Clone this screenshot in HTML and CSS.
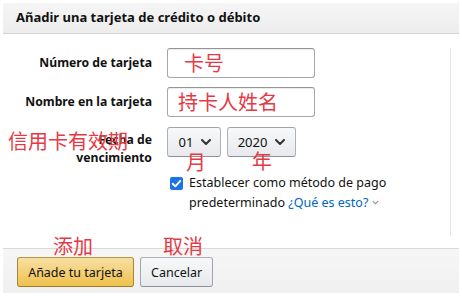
FILE: index.html
```html
<!DOCTYPE html>
<html lang="es">
<head>
<meta charset="utf-8">
<link rel="stylesheet" href="styles.css">
</head>
<body>
<div class="modal">
  <header class="modal-head">Añadir una tarjeta de crédito o débito</header>
  <main class="modal-body">
    <div class="form">
      <div class="row">
        <label class="label">Número de tarjeta</label>
        <div class="field"><div class="input cn-val cn-short">卡号</div></div>
      </div>
      <div class="row">
        <label class="label">Nombre en la tarjeta</label>
        <div class="field"><div class="input cn-val">持卡人姓名</div></div>
      </div>
      <div class="row row-date">
        <label class="label label-2">Fecha de<br>vencimiento</label>
        <div class="field selects">
          <div class="select sel-month">01 <svg class="chev" viewBox="0 0 10 6"><path d="M1 1l4 4 4-4" /></svg></div>
          <div class="select sel-year">2020 <svg class="chev" viewBox="0 0 10 6"><path d="M1 1l4 4 4-4" /></svg></div>
          <span class="note note-month">月</span>
          <span class="note note-year">年</span>
        </div>
        <span class="note note-exp">信用卡有效期</span>
      </div>
      <div class="row row-check">
        <div></div>
        <div class="check">
          <span class="box"><svg viewBox="0 0 12 12"><path d="M2.5 6.2l2.4 2.4 4.6-5" /></svg></span>
          <p class="check-text">Establecer como método de pago<br>predeterminado <a class="link">¿Qué es esto?</a> <svg class="mini-chev" viewBox="0 0 8 5"><path d="M1 1l3 3 3-3" /></svg></p>
        </div>
      </div>
    </div>
  </main>
  <footer class="modal-foot">
    <div class="btn-wrap">
      <span class="note note-add">添加</span>
      <button class="btn btn-primary">Añade tu tarjeta</button>
    </div>
    <div class="btn-wrap">
      <span class="note note-cancel">取消</span>
      <button class="btn btn-secondary">Cancelar</button>
    </div>
  </footer>
</div>
</body>
</html>
```

FILE: styles.css
```css
* { box-sizing: border-box; }
html, body { margin: 0; padding: 0; background: #fff; }
body {
  font-family: "Noto Sans", "Open Sans", Arial, sans-serif;
  color: #111;
  font-size: 13px;
  width: 462px;
  height: 299px;
  overflow: hidden;
}
.modal {
  margin: 3px 3px 0 3px;
}
.modal-head {
  height: 31px;
  background: linear-gradient(#f5f5f5, #ededed);
  border-bottom: 1px solid #d3d3d3;
  padding: 0 13px;
  line-height: 29px;
  font-size: 13px;
  font-weight: 700;
  color: #111;
}
.modal-body {
  height: 214px;
  padding-top: 14px;
}
.form {
  height: 188px;
  margin-right: 8px;
  border-right: 1px solid #e6e6e6;
  display: flex;
  flex-direction: column;
  gap: 9px;
}
.row {
  display: grid;
  grid-template-columns: 149px 148px;
  column-gap: 15px;
  align-items: center;
  position: relative;
}
.label {
  text-align: right;
  font-weight: 700;
  font-size: 12.2px;
  line-height: 18px;
}
.label-2 { align-self: start; padding-top: 5px; }
.input {
  height: 30px;
  border: 1px solid #a6a6a6;
  border-top-color: #949494;
  border-radius: 3px;
  box-shadow: 0 1px 0 rgba(255,255,255,.5), 0 1px 0 rgba(0,0,0,.07) inset;
  background: #fff;
}
.cn-val {
  font-family: "Noto Sans CJK SC", sans-serif;
  color: #e53a45;
  font-size: 20px;
  line-height: 28px;
  padding-left: 10px;
}
.cn-short { padding-left: 16px; }
.selects {
  display: flex;
  gap: 6px;
  position: relative;
  height: 40px;
  align-items: flex-start;
}
.select {
  height: 30px;
  border: 1px solid #adb1b8;
  border-top-color: #a2a6ac;
  border-bottom-color: #8d9096;
  border-radius: 3px;
  background: linear-gradient(#f7f8fa, #e7e9ec);
  display: flex;
  align-items: center;
  justify-content: center;
  gap: 8px;
  font-size: 13px;
  color: #111;
}
.sel-month { width: 54px; padding-left: 2px; }
.sel-year { width: 69px; }
.chev {
  width: 10px; height: 6px;
  fill: none; stroke: #333; stroke-width: 2; stroke-linecap: round; stroke-linejoin: round;
}
.note {
  position: absolute;
  font-family: "Noto Sans CJK SC", sans-serif;
  color: #e53a45;
  font-size: 20px;
  line-height: 20px;
  white-space: nowrap;
}
.note-month { left: 19px; top: 25px; }
.note-year { left: 85px; top: 24px; }
.note-exp { left: 5px; top: 5px; }
.row-check { margin-top: -3px; }
.check {
  display: flex;
  gap: 6px;
  align-items: flex-start;
  padding-left: 3px;
}
.box {
  width: 13px; height: 13px;
  margin-top: 4px;
  border-radius: 2px;
  background: #1a73e8;
  flex: none;
  display: flex;
}
.box svg {
  width: 13px; height: 13px;
  fill: none; stroke: #fff; stroke-width: 1.8; stroke-linecap: round; stroke-linejoin: round;
}
.check-text {
  margin: 0;
  font-size: 12.5px;
  line-height: 20px;
  color: #111;
  white-space: nowrap;
}
.link { color: #0066c0; }
.mini-chev {
  width: 7px; height: 5px;
  fill: none; stroke: #888; stroke-width: 1.2;
  vertical-align: 2px;
}
.modal-foot {
  height: 45px;
  border-top: 1px solid #d9d9d9;
  background: linear-gradient(#f6f6f6, #f0f0f0);
  display: flex;
  gap: 6px;
  padding: 8px 14px;
}
.btn-wrap { position: relative; }
.note-add { left: 36px; top: -21px; }
.note-cancel { left: 23px; top: -21px; }
.btn {
  height: 30px;
  border-radius: 3px;
  font-family: inherit;
  font-size: 12.5px;
  color: #111;
  padding: 0 10px;
  cursor: pointer;
}
.btn-primary {
  width: 117px;
  background: linear-gradient(#f7dfa5, #f0c14b);
  border: 1px solid #a88734;
  border-color: #b8973f #a88734 #9c7e31;
}
.btn-secondary {
  width: 73px;
  background: linear-gradient(#f7f8fa, #e7e9ec);
  border: 1px solid #adb1b8;
  border-color: #adb1b8 #a2a6ac #8d9096;
}
```
